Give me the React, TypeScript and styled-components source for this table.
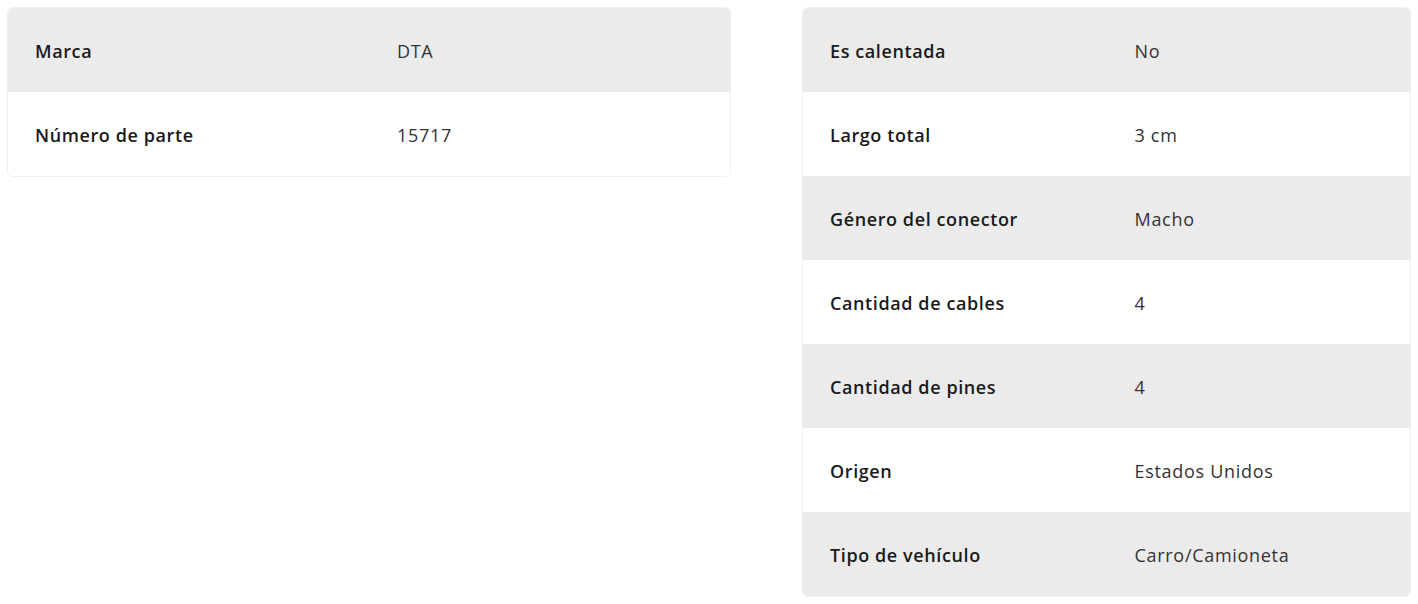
import styled, { createGlobalStyle } from "styled-components";

const GlobalStyle = createGlobalStyle`
  body {
    margin: 0;
    background: #fff;
    font-family: "Open Sans", Lato, sans-serif;
  }
`;

type Spec = { label: string; value: string };

const left: Spec[] = [
  { label: "Marca", value: "DTA" },
  { label: "Número de parte", value: "15717" },
];

const right: Spec[] = [
  { label: "Es calentada", value: "No" },
  { label: "Largo total", value: "3 cm" },
  { label: "Género del conector", value: "Macho" },
  { label: "Cantidad de cables", value: "4" },
  { label: "Cantidad de pines", value: "4" },
  { label: "Origen", value: "Estados Unidos" },
  { label: "Tipo de vehículo", value: "Carro/Camioneta" },
];

const Page = styled.div`
  display: grid;
  grid-template-columns: 724fr 609fr;
  column-gap: 71px;
  align-items: start;
  padding: 7px 7px;
`;

const Table = styled.div`
  border: 1px solid #efefef;
  border-radius: 6px;
  overflow: hidden;
`;

const Row = styled.div<{ $shaded: boolean }>`
  display: grid;
  grid-template-columns: 1fr 1fr;
  height: 84px;
  padding-top: 2px;
  box-sizing: border-box;
  align-items: center;
  background: ${(p) => (p.$shaded ? "#ebebeb" : "#fff")};
`;

const Label = styled.div`
  padding: 0 27px;
  font-size: 18px;
  font-weight: 600;
  letter-spacing: 0.6px;
  color: #1a1a1a;
`;

const Value = styled.div`
  padding: 0 28px;
  font-size: 18px;
  letter-spacing: 0.7px;
  color: #333;
`;

const SpecTable = ({ rows }: { rows: Spec[] }) => (
  <Table>
    {rows.map((r, i) => (
      <Row key={r.label} $shaded={i % 2 === 0}>
        <Label>{r.label}</Label>
        <Value>{r.value}</Value>
      </Row>
    ))}
  </Table>
);

export default function App() {
  return (
    <>
      <GlobalStyle />
      <Page>
        <SpecTable rows={left} />
        <SpecTable rows={right} />
      </Page>
    </>
  );
}
